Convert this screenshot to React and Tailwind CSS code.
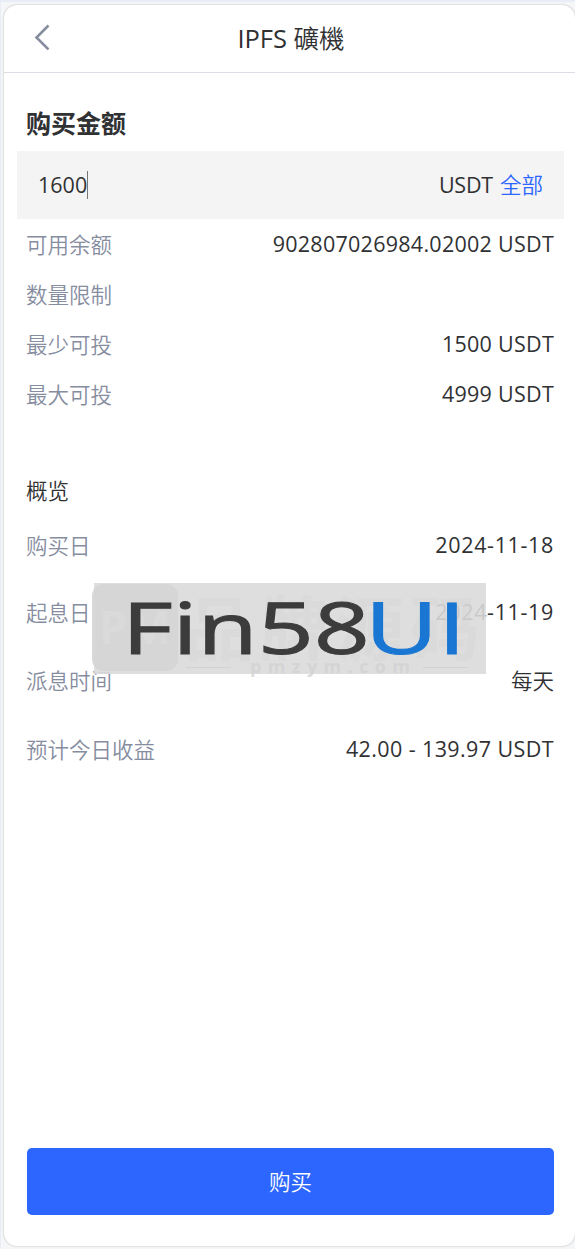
import React, { useState } from 'react';

const limits = [
  { label: '可用余额', value: '902807026984.02002 USDT' },
  { label: '数量限制', value: '' },
  { label: '最少可投', value: '1500 USDT' },
  { label: '最大可投', value: '4999 USDT' },
];

const overview = [
  { label: '购买日', value: '2024-11-18', row: 'h-[67px]', spacing: 'pb-[2px] tracking-[0.65px]' },
  { label: '起息日', value: '2024-11-19', row: 'h-[67px]', spacing: 'pb-[2px] tracking-[0.65px]' },
  { label: '派息时间', value: '每天', row: 'h-[69px]', spacing: 'font-[350]' },
  { label: '预计今日收益', value: '42.00 - 139.97 USDT', row: 'h-[69px]', spacing: 'pb-[2px] tracking-[0.4px]' },
];

const Row = ({ label, value, className, spacing = 'pb-[2px] tracking-[0.27px]' }) => (
  <div className={`flex items-center justify-between pl-[22px] pr-[21px] ${className}`}>
    <span className="font-[350] text-[#868d9f]">{label}</span>
    <span className={spacing}>{value}</span>
  </div>
);

const Header = ({ title, suffix }) => (
  <header className="relative flex h-[68px] shrink-0 items-center justify-center border-b border-[#dcdee6] pl-[3px]">
    <button className="absolute left-[29px] top-[19px]" aria-label="back">
      <svg width="18" height="26" viewBox="0 0 18 26" fill="none" stroke="#868d9f" strokeWidth="2.6">
        <path d="M15.5 1.5 L3.5 13.5 L15.5 25.5" />
      </svg>
    </button>
    <h1 className="pb-[2px] text-[25.5px]">
      {title} <span className="font-[350]">{suffix}</span>
    </h1>
  </header>
);

// Watermark laid over the overview rows
const Watermark = () => (
  <svg
    className="pointer-events-none absolute left-[87px] top-[578px] overflow-visible"
    width="396"
    height="104"
    viewBox="0 0 396 104"
  >
    <rect x="3" y="0" width="392" height="91" fill="#dadada" fillOpacity="0.9" />
    <rect x="1" y="1" width="86" height="87" rx="12" fill="#d5d5d5" fillOpacity="0.9" />
    <g fill="#d2d2d2" fontWeight="700">
      <text x="8" y="61" fontSize="46" textLength="72" lengthAdjust="spacingAndGlyphs" fill="#dadada">PM</text>
      <text x="93" y="72" fontSize="70" textLength="296" fillOpacity="0.3">品牌源码</text>
      <text x="159" y="90" fontSize="18" textLength="160" fillOpacity="0.8">pmzym.com</text>
      <rect x="95" y="84" width="45" height="1" />
      <rect x="332" y="84" width="45" height="1" />
    </g>
    <text x="31" y="71" fontSize="71" textLength="248" lengthAdjust="spacingAndGlyphs" fill="#3c3c3c" stroke="#3c3c3c" strokeWidth="1">Fin58</text>
    <text x="274" y="71" fontSize="71" textLength="101" lengthAdjust="spacingAndGlyphs" fill="#1976d2" stroke="#1976d2" strokeWidth="1">UI</text>
  </svg>
);

export default function App() {
  const [amount, setAmount] = useState('1600');

  return (
    <div className="h-[1249px] border-t-2 border-l border-[#e9edf5] bg-[#f5f6f7] pt-[3px] pl-[3px] font-['Open_Sans','Noto_Sans_CJK_SC',sans-serif] text-[21.5px] leading-[30px] text-[#303133]">
      <main className="relative flex h-[1241px] flex-col rounded-[13px] bg-white shadow-[0_0_2px_rgba(0,0,0,0.3)]">
        <Header title="IPFS" suffix="礦機" />

        <h2 className="mt-[33px] pl-[22px] text-[25px] font-bold leading-[34px]">购买金额</h2>

        <div className="ml-[13px] mr-[11px] mt-[11px] flex h-[68px] shrink-0 items-center bg-[#f4f4f4] px-[21px]">
          <div className="flex grow items-center">
            <input
              className="w-[49px] bg-transparent outline-none"
              value={amount}
              onChange={(e) => setAmount(e.target.value)}
            />
            <span className="h-[28px] w-px bg-[#777]" />
          </div>
          <span className="tracking-[-0.2px]">USDT</span>
          <button className="ml-[7px] font-[350] text-[#2c66ff]">全部</button>
        </div>

        <section className="mt-px">
          {limits.map((item) => (
            <Row key={item.label} {...item} className="h-[50px]" />
          ))}
        </section>

        <h3 className="mt-[56px] pl-[22px] font-[350]">概览</h3>

        <section className="mt-[6px]">
          {overview.map(({ row, ...item }) => (
            <Row key={item.label} {...item} className={row} />
          ))}
        </section>

        <button className="mb-[31px] ml-[23px] mr-[21px] mt-auto h-[67px] rounded-[5px] bg-[#2c66ff] font-[350] text-white">
          购买
        </button>

        <Watermark />
      </main>
    </div>
  );
}
